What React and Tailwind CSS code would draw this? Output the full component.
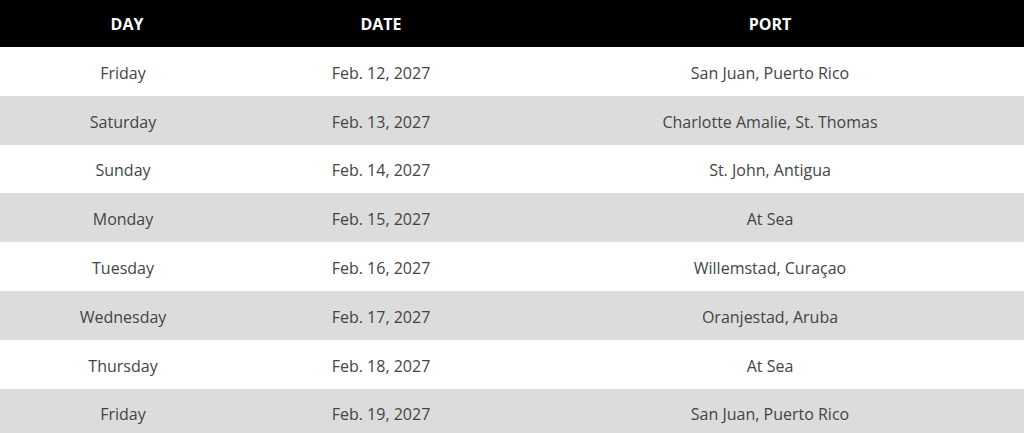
const rows = [
  ["Friday", "Feb. 12, 2027", "San Juan, Puerto Rico"],
  ["Saturday", "Feb. 13, 2027", "Charlotte Amalie, St. Thomas"],
  ["Sunday", "Feb. 14, 2027", "St. John, Antigua"],
  ["Monday", "Feb. 15, 2027", "At Sea"],
  ["Tuesday", "Feb. 16, 2027", "Willemstad, Curaçao"],
  ["Wednesday", "Feb. 17, 2027", "Oranjestad, Aruba"],
  ["Thursday", "Feb. 18, 2027", "At Sea"],
  ["Friday", "Feb. 19, 2027", "San Juan, Puerto Rico"],
];

export default function App() {
  return (
    <div className="w-[1024px] h-[433px] overflow-hidden bg-white font-['Open_Sans',sans-serif] text-[16px]">
      <div className="grid grid-cols-[254px_254px_1fr] h-[47px] bg-black text-white font-bold items-center text-center">
        <div>DAY</div>
        <div>DATE</div>
        <div className="pl-2">PORT</div>
      </div>
      {rows.map((r, i) => (
        <div
          key={i}
          className={`grid grid-cols-[254px_254px_1fr] h-[48.8px] pt-[3px] items-center text-center text-[#444] ${
            i % 2 ? "bg-[#dcdcdc]" : "bg-white"
          }`}
        >
          <div className="pr-2">{r[0]}</div>
          <div>{r[1]}</div>
          <div className="pl-2">{r[2]}</div>
        </div>
      ))}
    </div>
  );
}
